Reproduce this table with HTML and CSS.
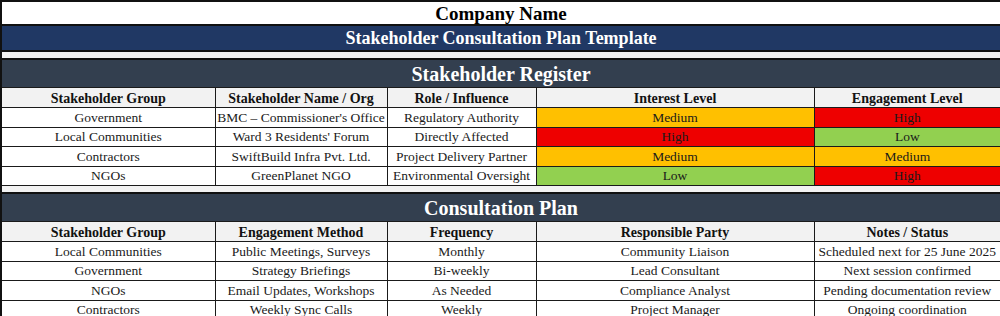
FILE: index.html
```html
<!DOCTYPE html>
<html>
<head>
<meta charset="utf-8">
<link rel="stylesheet" href="styles.css">
</head>
<body>
<table class="sheet">
  <colgroup>
    <col class="c1"><col class="c2"><col class="c3"><col class="c4"><col class="c5">
  </colgroup>
  <tbody>
    <tr class="r-company"><td colspan="5" class="company">Company Name</td></tr>
    <tr class="r-title"><td colspan="5" class="title">Stakeholder Consultation Plan Template</td></tr>
    <tr class="r-gap"><td colspan="5" class="gap"></td></tr>
    <tr class="r-section"><td colspan="5" class="section">Stakeholder Register</td></tr>
    <tr class="r-head">
      <th>Stakeholder Group</th><th>Stakeholder Name / Org</th><th>Role / Influence</th><th>Interest Level</th><th>Engagement Level</th>
    </tr>
    <tr class="r-data"><td>Government</td><td>BMC – Commissioner's Office</td><td>Regulatory Authority</td><td class="med">Medium</td><td class="high">High</td></tr>
    <tr class="r-data"><td>Local Communities</td><td>Ward 3 Residents' Forum</td><td>Directly Affected</td><td class="high">High</td><td class="low">Low</td></tr>
    <tr class="r-data"><td>Contractors</td><td>SwiftBuild Infra Pvt. Ltd.</td><td>Project Delivery Partner</td><td class="med">Medium</td><td class="med">Medium</td></tr>
    <tr class="r-data"><td>NGOs</td><td>GreenPlanet NGO</td><td>Environmental Oversight</td><td class="low">Low</td><td class="high">High</td></tr>
    <tr class="r-gap"><td colspan="5" class="gap"></td></tr>
    <tr class="r-section"><td colspan="5" class="section">Consultation Plan</td></tr>
    <tr class="r-head">
      <th>Stakeholder Group</th><th>Engagement Method</th><th>Frequency</th><th>Responsible Party</th><th>Notes / Status</th>
    </tr>
    <tr class="r-data"><td>Local Communities</td><td>Public Meetings, Surveys</td><td>Monthly</td><td>Community Liaison</td><td>Scheduled next for 25 June 2025</td></tr>
    <tr class="r-data"><td>Government</td><td>Strategy Briefings</td><td>Bi-weekly</td><td>Lead Consultant</td><td>Next session confirmed</td></tr>
    <tr class="r-data"><td>NGOs</td><td>Email Updates, Workshops</td><td>As Needed</td><td>Compliance Analyst</td><td>Pending documentation review</td></tr>
    <tr class="r-data"><td>Contractors</td><td>Weekly Sync Calls</td><td>Weekly</td><td>Project Manager</td><td>Ongoing coordination</td></tr>
  </tbody>
</table>
</body>
</html>
```
FILE: styles.css
```css
html, body {
  margin: 0;
  padding: 0;
  background: #ffffff;
}
body {
  font-family: "Liberation Serif", "DejaVu Serif", serif;
  color: #111111;
  overflow: hidden;
}
.sheet {
  width: 1000px;
  table-layout: fixed;
  border-collapse: collapse;
  border: 2px solid #111111;
}
.c1 { width: 214px; }
.c2 { width: 172px; }
.c3 { width: 149px; }
.c4 { width: 278px; }
.c5 { width: 187px; }

.sheet td, .sheet th {
  border: 1px solid #1a1a1a;
  padding: 0 1px;
  text-align: center;
  vertical-align: middle;
  white-space: nowrap;
  overflow: hidden;
  line-height: 1;
}
.company {
  height: 22px;
  font-size: 19px;
  font-weight: bold;
  border-bottom: 2px solid #111111 !important;
  color: #000;
}
.title {
  height: 24px;
  font-size: 18px;
  font-weight: bold;
  color: #ffffff;
  background: #203864;
  border-bottom: 2px solid #111111 !important;
}
.gap {
  height: 6px;
  background: #f2f2f2;
}
.section {
  height: 27px;
  font-size: 20px;
  font-weight: bold;
  color: #ffffff;
  background: #333f4f;
  border-top: 2px solid #111111 !important;
}
.r-head th {
  height: 17px;
  padding-top: 2px;
  font-size: 14px;
  font-weight: bold;
  background: #f2f2f2;
  color: #111;
}
.r-data td {
  height: 18.5px;
  font-size: 13.5px;
  color: #1a1a1a;
}
.med { background: #ffc000; }
.high { background: #ee0000; }
.low { background: #92d050; }
```
